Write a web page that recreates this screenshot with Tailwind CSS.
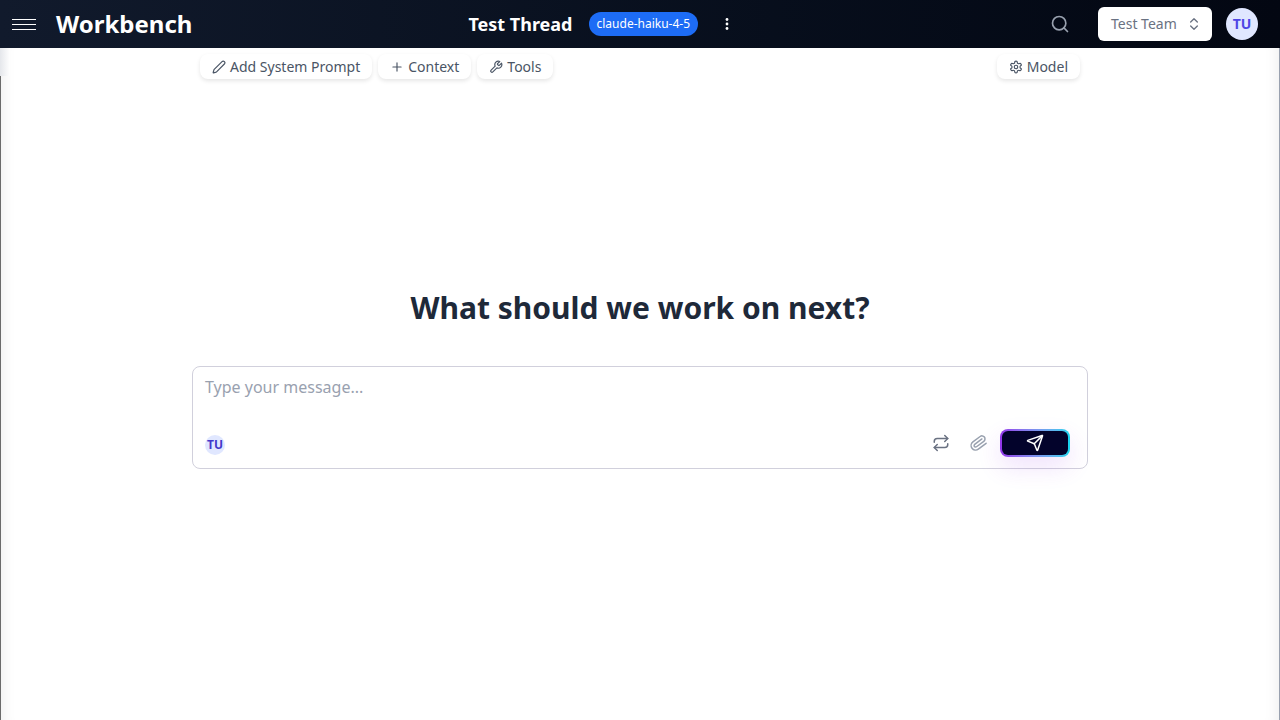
<!doctype html>
<html lang="en">

<head>
    <meta charset="UTF-8" />
    <meta name="viewport" content="width=device-width, initial-scale=1.0" />
    <title>Workbench</title>
    <script src="https://cdn.jsdelivr.net/npm/@tailwindcss/browser@4"></script>
</head>

<body class="bg-white text-gray-900 font-['Noto_Sans',sans-serif] overflow-hidden">
    <div class="flex flex-col w-[1280px] h-[720px]">
        <!-- header -->
        <header class="flex items-center h-12 shrink-0 bg-gradient-to-r from-[#111a2c] to-[#030712] text-white">
            <div class="flex items-center pl-3 gap-[20px]">
                <div class="flex flex-col gap-[4px] w-6">
                    <div class="h-px bg-white"></div>
                    <div class="h-px bg-white"></div>
                    <div class="h-px bg-white"></div>
                </div>
                <span class="text-2xl font-bold leading-8">Workbench</span>
            </div>
            <div class="flex items-center ml-[276px]">
                <span class="text-lg font-bold leading-7">Test Thread</span>
                <span class="ml-4 h-6 px-2 flex items-center rounded-full bg-[#1d6cf5] text-xs text-white">claude-haiku-4-5</span>
                <svg class="ml-[21px] w-4 h-4" viewBox="0 0 16 16" fill="#fff"><circle cx="8" cy="3.5" r="1.4"/><circle cx="8" cy="8" r="1.4"/><circle cx="8" cy="12.5" r="1.4"/></svg>
            </div>
            <div class="flex items-center ml-auto pr-[22px]">
                <svg class="w-5 h-5 text-gray-400" viewBox="0 0 24 24" fill="none" stroke="currentColor" stroke-width="2" stroke-linecap="round"><circle cx="11" cy="11" r="8"/><path d="m21 21-4.3-4.3"/></svg>
                <div class="ml-[28px] flex items-center w-[114px] h-[34px] pl-[13px] rounded-md bg-white text-sm text-gray-500">
                    Test Team
                    <svg class="ml-[9px] w-4 h-4 text-gray-500" viewBox="0 0 24 24" fill="none" stroke="currentColor" stroke-width="2" stroke-linecap="round" stroke-linejoin="round"><path d="m7 15 5 5 5-5"/><path d="m7 9 5-5 5 5"/></svg>
                </div>
                <div class="ml-[14px] flex items-center justify-center w-8 h-8 rounded-full bg-[#e0e7ff] text-sm font-bold text-[#4f46e5]">TU</div>
            </div>
        </header>

        <!-- body -->
        <main class="relative flex-1 border-l border-r border-l-[#6b6b6b] border-r-gray-400 shadow-[inset_-14px_0_14px_-12px_rgba(0,0,0,0.07),inset_14px_0_14px_-12px_rgba(0,0,0,0.07)]">
            <div class="absolute -left-px top-0 w-[10px] h-[28px] bg-gradient-to-r from-gray-200 to-white"></div>
            <div class="flex justify-between w-[880px] ml-[199px] mt-[6px]">
                <div class="flex gap-[6px]">
                    <button class="flex items-center gap-1 h-[25px] px-3 rounded-lg bg-white shadow-[0_2px_4px_rgba(0,0,0,0.1)] text-sm text-gray-600">
                        <svg class="w-3.5 h-3.5" viewBox="0 0 24 24" fill="none" stroke="currentColor" stroke-width="2" stroke-linecap="round" stroke-linejoin="round"><path d="M21.2 6.8a2.8 2.8 0 0 0-4-4L3.8 16.2a2 2 0 0 0-.5.8l-1.3 4.4a.5.5 0 0 0 .6.6l4.4-1.3a2 2 0 0 0 .8-.5z"/></svg>
                        Add System Prompt
                    </button>
                    <button class="flex items-center gap-1 h-[25px] px-3 rounded-lg bg-white shadow-[0_2px_4px_rgba(0,0,0,0.1)] text-sm text-gray-600">
                        <svg class="w-3.5 h-3.5" viewBox="0 0 24 24" fill="none" stroke="currentColor" stroke-width="2" stroke-linecap="round"><path d="M5 12h14"/><path d="M12 5v14"/></svg>
                        Context
                    </button>
                    <button class="flex items-center gap-1 h-[25px] px-3 rounded-lg bg-white shadow-[0_2px_4px_rgba(0,0,0,0.1)] text-sm text-gray-600">
                        <svg class="w-3.5 h-3.5" viewBox="0 0 24 24" fill="none" stroke="currentColor" stroke-width="2" stroke-linecap="round" stroke-linejoin="round"><path d="M14.7 6.3a1 1 0 0 0 0 1.4l1.6 1.6a1 1 0 0 0 1.4 0l3.77-3.77a6 6 0 0 1-7.94 7.94l-6.91 6.91a2.12 2.12 0 0 1-3-3l6.91-6.91a6 6 0 0 1 7.94-7.94l-3.76 3.76z"/></svg>
                        Tools
                    </button>
                </div>
                <button class="flex items-center gap-1 h-[25px] px-3 rounded-lg bg-white shadow-[0_2px_4px_rgba(0,0,0,0.1)] text-sm text-gray-600">
                    <svg class="w-3.5 h-3.5" viewBox="0 0 24 24" fill="none" stroke="currentColor" stroke-width="2" stroke-linecap="round" stroke-linejoin="round"><path d="M12.22 2h-.44a2 2 0 0 0-2 2v.18a2 2 0 0 1-1 1.73l-.43.25a2 2 0 0 1-2 0l-.15-.08a2 2 0 0 0-2.73.73l-.22.38a2 2 0 0 0 .73 2.73l.15.1a2 2 0 0 1 1 1.72v.51a2 2 0 0 1-1 1.74l-.15.09a2 2 0 0 0-.73 2.73l.22.38a2 2 0 0 0 2.73.73l.15-.08a2 2 0 0 1 2 0l.43.25a2 2 0 0 1 1 1.73V20a2 2 0 0 0 2 2h.44a2 2 0 0 0 2-2v-.18a2 2 0 0 1 1-1.73l.43-.25a2 2 0 0 1 2 0l.15.08a2 2 0 0 0 2.73-.73l.22-.39a2 2 0 0 0-.73-2.73l-.15-.08a2 2 0 0 1-1-1.74v-.5a2 2 0 0 1 1-1.74l.15-.09a2 2 0 0 0 .73-2.73l-.22-.38a2 2 0 0 0-2.73-.73l-.15.08a2 2 0 0 1-2 0l-.43-.25a2 2 0 0 1-1-1.73V4a2 2 0 0 0-2-2z"/><circle cx="12" cy="12" r="3"/></svg>
                    Model
                </button>
            </div>

            <h1 class="mt-[211px] text-center text-3xl font-bold leading-9 text-gray-800">What should we work on next?</h1>

            <div class="relative w-[896px] h-[103px] ml-[191px] mt-10 rounded-lg border border-[#d1d0dc] bg-white">
                <p class="absolute left-3 top-[8px] text-base leading-6 text-gray-400">Type your message...</p>
                <div class="absolute left-3 top-[68px] flex items-center justify-center w-5 h-5 rounded-full bg-[#e0e7ff] text-xs font-bold text-[#4338ca]">TU</div>
                <div class="absolute right-[17px] top-[62px] flex items-center">
                    <svg class="w-[18px] h-[18px] text-gray-500" viewBox="0 0 24 24" fill="none" stroke="currentColor" stroke-width="2" stroke-linecap="round" stroke-linejoin="round"><path d="m17 2 4 4-4 4"/><path d="M3 11v-1a4 4 0 0 1 4-4h14"/><path d="m7 22-4-4 4-4"/><path d="M21 13v1a4 4 0 0 1-4 4H3"/></svg>
                    <svg class="ml-[20px] w-[18px] h-[18px] text-gray-400 rotate-[8deg]" viewBox="0 0 24 24" fill="none" stroke="currentColor" stroke-width="2" stroke-linecap="round" stroke-linejoin="round"><path d="m21.44 11.05-9.19 9.19a6 6 0 0 1-8.49-8.49l8.57-8.57A4 4 0 1 1 18 8.84l-8.59 8.57a2 2 0 0 1-2.83-2.83l8.49-8.48"/></svg>
                    <div class="ml-[12px] p-[2px] w-[70px] h-[28px] rounded-lg bg-gradient-to-r from-[#9333ea] to-[#06d4ee] shadow-[0_10px_24px_rgba(147,51,234,0.14)]">
                        <div class="flex items-center justify-center w-full h-full rounded-md bg-[#03032b]">
                            <svg class="w-[18px] h-[18px] text-white" viewBox="0 0 24 24" fill="none" stroke="currentColor" stroke-width="2" stroke-linecap="round" stroke-linejoin="round"><path d="M14.536 21.686a.5.5 0 0 0 .937-.024l6.5-19a.496.496 0 0 0-.635-.635l-19 6.5a.5.5 0 0 0-.024.937l7.93 3.18a2 2 0 0 1 1.112 1.11z"/><path d="m21.854 2.147-10.94 10.939"/></svg>
                        </div>
                    </div>
                </div>
            </div>
        </main>
    </div>
</body>

</html>
